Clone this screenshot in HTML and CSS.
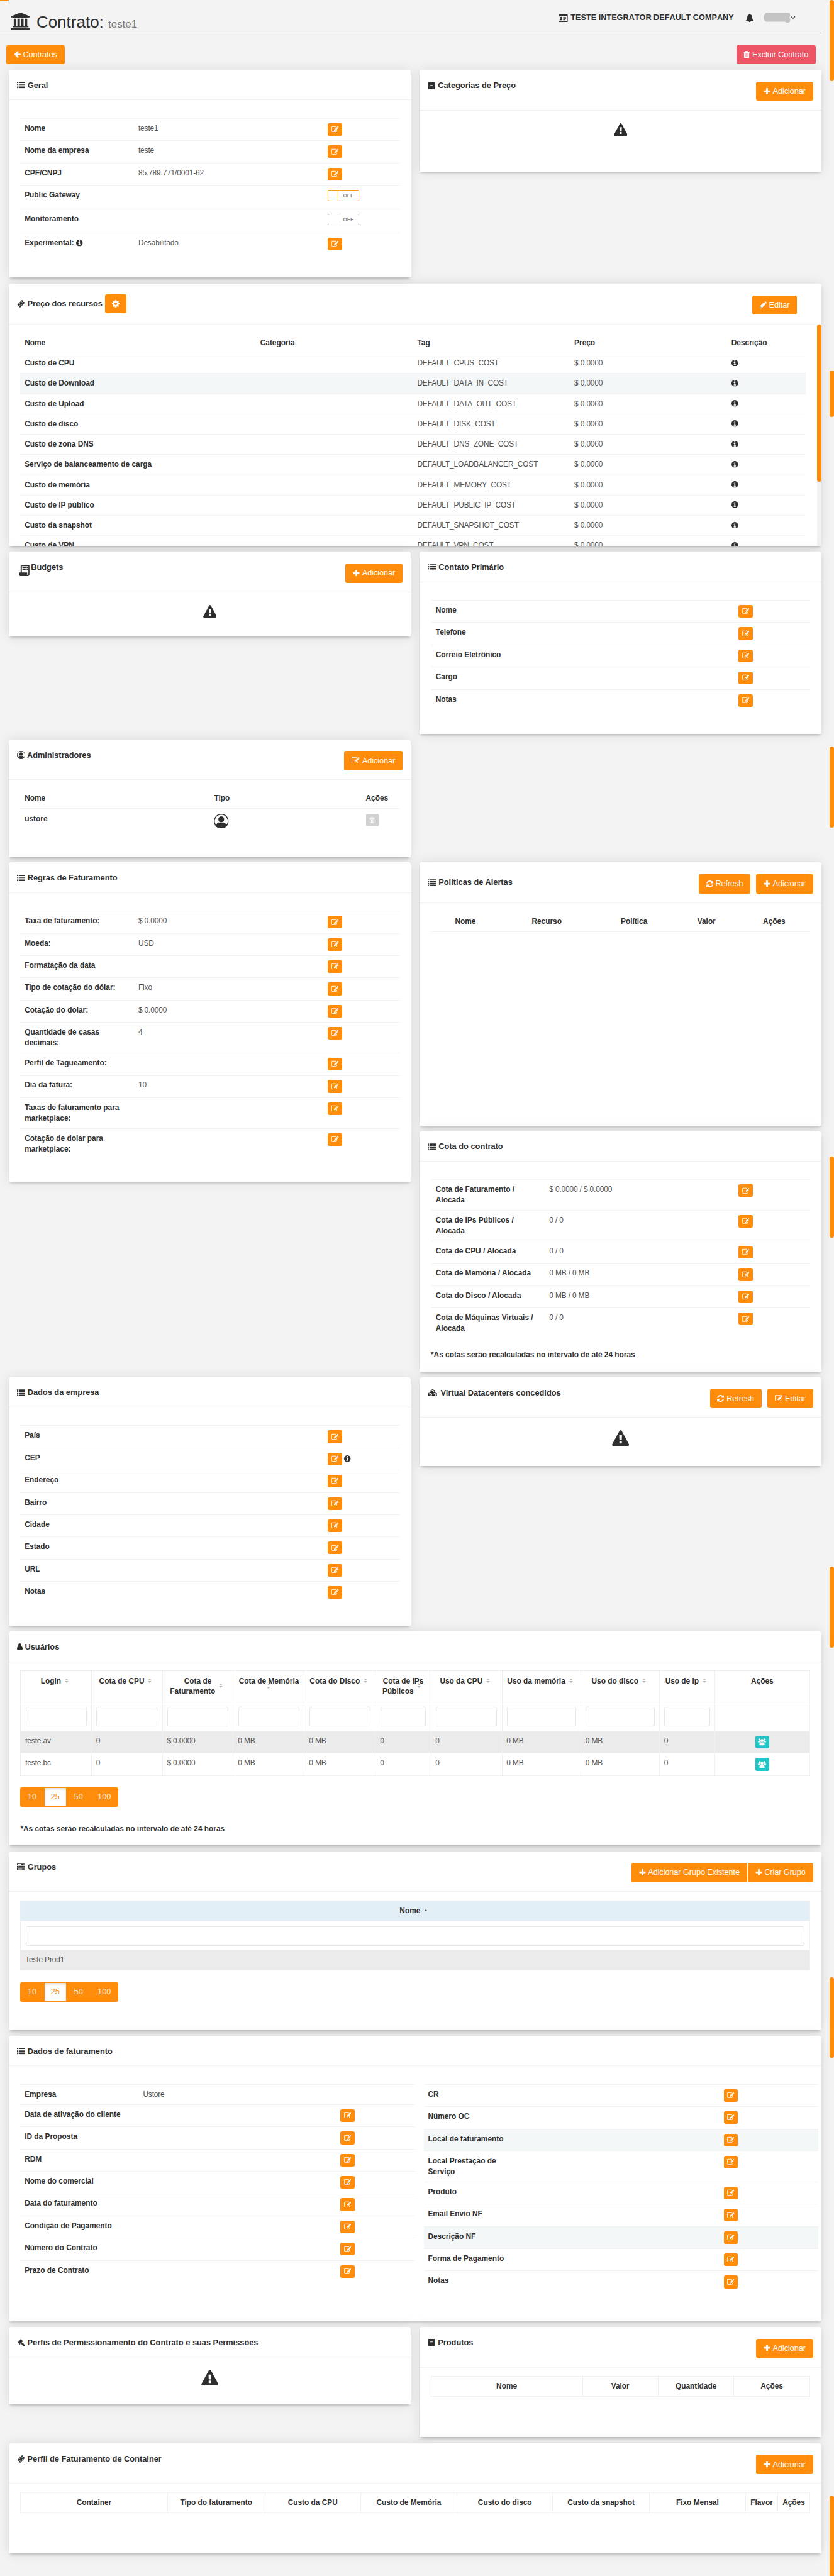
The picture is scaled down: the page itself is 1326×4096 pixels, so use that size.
FILE: index.html
```html
<!DOCTYPE html>
<html lang="pt-BR">
<head>
<meta charset="utf-8">
<title>Contrato: teste1</title>
<link rel="stylesheet" href="styles.css">
</head>
<body>
<svg class="sprite" aria-hidden="true">
<symbol id="edit" viewBox="0 0 1792 1792"><path d="M888 1184l116-116-152-152-116 116v56h96v96h56zm440-720q-16-16-33 1l-350 350q-17 17-1 33t33-1l350-350q17-17 1-33zm80 594v190q0 119-84.5 203.5t-203.5 84.5h-832q-119 0-203.5-84.5t-84.5-203.5v-832q0-119 84.5-203.5t203.5-84.5h832q63 0 117 25 15 7 18 23 3 17-9 29l-49 49q-14 14-32 8-23-6-45-6h-832q-66 0-113 47t-47 113v832q0 66 47 113t113 47h832q66 0 113-47t47-113v-126q0-13 9-22l64-64q15-15 35-7t20 29zm-96-738l288 288-672 672h-288v-288zm444 132l-92 92-288-288 92-92q28-28 68-28t68 28l152 152q28 28 28 68t-28 68z"/></symbol>
<symbol id="plus" viewBox="192 128 1408 1536"><path d="M1600 736v192q0 40-28 68t-68 28h-416v416q0 40-28 68t-68 28h-192q-40 0-68-28t-28-68v-416h-416q-40 0-68-28t-28-68v-192q0-40 28-68t68-28h416v-416q0-40 28-68t68-28h192q40 0 68 28t28 68v416h416q40 0 68 28t28 68z"/></symbol>
<symbol id="info" viewBox="128 128 1536 1536"><path d="M1152 1376v-160q0-14-9-23t-23-9h-96v-512q0-14-9-23t-23-9h-320q-14 0-23 9t-9 23v160q0 14 9 23t23 9h96v320h-96q-14 0-23 9t-9 23v160q0 14 9 23t23 9h448q14 0 23-9t9-23zm-128-896v-160q0-14-9-23t-23-9h-192q-14 0-23 9t-9 23v160q0 14 9 23t23 9h192q14 0 23-9t9-23zm640 416q0 209-103 385.5t-279.5 279.5-385.5 103-385.5-103-279.5-279.5-103-385.5 103-385.5 279.5-279.5 385.5-103 385.5 103 279.5 279.5 103 385.5z"/></symbol>
<symbol id="warn" viewBox="0 0 1792 1664"><path d="M1024 1375v-190q0-14-9.5-23.5t-22.5-9.5h-192q-13 0-22.5 9.5t-9.5 23.5v190q0 14 9.5 23.5t22.5 9.5h192q13 0 22.5-9.5t9.5-23.5zm-2-374l18-459q0-12-10-19-13-11-24-11h-220q-11 0-24 11-10 7-10 21l17 457q0 10 10 16.5t24 6.5h185q14 0 23.5-6.5t10.5-16.5zm-14-934l768 1408q35 63-2 126-17 29-46.5 46t-63.5 17h-1536q-34 0-63.5-17t-46.5-46q-37-63-2-126l768-1408q17-31 47-49t65-18 65 18 47 49z"/></symbol>
<symbol id="refresh" viewBox="128 128 1536 1536"><path d="M1639 1056q0 5-1 7-64 268-268 434.5t-478 166.5q-146 0-282.5-55t-243.5-157l-129 129q-19 19-45 19t-45-19-19-45v-448q0-26 19-45t45-19h448q26 0 45 19t19 45-19 45l-137 137q71 66 161 102t187 36q134 0 250-65t186-179q11-17 53-117 8-23 30-23h192q13 0 22.5 9.5t9.5 22.5zm25-800v448q0 26-19 45t-45 19h-448q-26 0-45-19t-19-45 19-45l138-138q-148-137-349-137-134 0-250 65t-186 179q-11 17-53 117-8 23-30 23h-199q-13 0-22.5-9.5t-9.5-22.5v-7q65-268 270-434.5t480-166.5q146 0 284 55.5t245 156.5l130-129q19-19 45-19t45 19 19 45z"/></symbol>
<symbol id="back" viewBox="64 160 1600 1600"><path d="M1664 896v128q0 53-32.5 90.5t-84.5 37.5h-704l293 294q38 36 38 90t-38 90l-75 76q-37 37-90 37-52 0-91-37l-651-652q-37-37-37-90 0-52 37-91l651-650q38-38 91-38 52 0 90 38l75 74q38 38 38 91t-38 91l-293 293h704q52 0 84.5 37.5t32.5 90.5z"/></symbol>
<symbol id="bank" viewBox="0 0 1920 1792"><path d="M960 0l960 384v128h-128q0 26-20.5 45t-48.5 19h-1526q-28 0-48.5-19t-20.5-45h-128v-128zm-704 640h256v768h128v-768h256v768h128v-768h256v768h128v-768h256v768h59q28 0 48.5 19t20.5 45v64h-1664v-64q0-26 20.5-45t48.5-19h59v-768zm1595 960q28 0 48.5 19t20.5 45v128h-1920v-128q0-26 20.5-45t48.5-19h1782z"/></symbol>
<symbol id="list" viewBox="0 0 14 11"><path d="M0 0h2v2H0zM3 0h11v2H3zM0 3h2v2H0zM3 3h11v2H3zM0 6h2v2H0zM3 6h11v2H3zM0 9h2v2H0zM3 9h11v2H3z"/></symbol>
<symbol id="server" viewBox="0 0 14 11"><path fill-rule="evenodd" d="M0 0h14v3H0zM1 1v1h6V1zM11.500 1v1h1V1zM0 4h14v3H0zM1 5v1h3V5zM11.500 5v1h1V5zM0 8h14v3H0zM1 9v1h8V9zM11.500 9v1h1V9z"/></symbol>
<symbol id="book" viewBox="0 0 12 12"><path fill-rule="evenodd" d="M.5 0h11v12H.5zM4 4.500v1.200h4V4.500z"/></symbol>
<symbol id="trash" viewBox="0 0 11 12"><path fill-rule="evenodd" d="M3.500 0h4l.7 1.500H11v1H10V11q0 1-1 1H2q-1 0-1-1V2.500H0v-1h2.800zM4.200.8l-.3.700h3.200l-.3-.700zM2.800 4v6h.9V4zM5 4v6h.9V4zM7.300 4v6h.9V4z"/></symbol>
<symbol id="bell" viewBox="0 0 14 14"><path d="M7 0q.9 0 .9 1Q11 1.800 11 5.500q0 4 2.500 6H8.600Q8.500 14 7 14t-1.600-2.500H.5Q3 9.500 3 5.500 3 1.800 6.100 1 6.100 0 7 0z"/></symbol>
<symbol id="card" viewBox="0 0 16 13"><path fill-rule="evenodd" d="M1 0h14q1 0 1 1v11q0 1-1 1H1q-1 0-1-1V1q0-1 1-1zM1.200 2.500V11.500H14.800V2.500zM2.500 10q0-2.600 1.300-2.800-.8-.700-.8-1.600Q3 4 4.500 4T6 5.600q0 .9-.8 1.600Q6.500 7.400 6.500 10zM8 4.500h5v1.200H8zM8 6.700h5v1.100H8zM8 8.800h3.500V10H8z"/></symbol>
<symbol id="gear" viewBox="0 0 12 12"><path fill-rule="evenodd" d="M5 0h2l.3 1.600 1 .4L9.700 1.100l1.300 1.300L10.100 3.700l.4 1L12 5v2l-1.500.3-.4 1 .9 1.400-1.300 1.300L8.300 10.100l-1 .4L7 12H5l-.3-1.500-1-.4L2.300 11 1 9.700 1.900 8.300l-.4-1L0 7V5l1.500-.3.4-1L1 2.400 2.300 1.100 3.700 2l1-.4zM6 4a2 2 0 1 0 .01 0z"/></symbol>
<symbol id="pencil" viewBox="0 0 12 12"><path fill-rule="evenodd" d="M0 12V8.800L7.300 1.500l3.200 3.200L3.200 12zM1 9.400v1.300h.9v.5h.9l.7-.7L1.600 8.700zM8 .8l.6-.5q.7-.6 1.400 0l1.700 1.700q.6.700 0 1.400l-.5.600z"/></symbol>
<symbol id="ticket" viewBox="0 0 14 14"><path fill-rule="evenodd" d="M8.400.2q.4-.4.8 0l1 1q-.3 1 .4 1.800t1.900.4l1.200 1.200q.4.400 0 .8L5.600 13.800q-.4.400-.8 0l-1.100-1.100q.3-1.100-.4-1.900t-1.800-.4L.3 9.200q-.4-.4 0-.8zM7.900 2.600L2.600 7.900l3.500 3.500 5.300-5.300zM7.900 3.400l2.700 2.700-4.500 4.500-2.700-2.700z"/></symbol>
<symbol id="receipt" viewBox="0 0 18 20"><path fill-rule="evenodd" d="M3 1l1 1 1.200-1 1.200 1 1.200-1L8.800 2 10 1l1.200 1 1.200-1 1.200 1 1.200-1L16 2l1.800-1v16q0 3-3 3H3q-3 0-3-3v-3h3zM5 3.500V14h9v3q0 1.200 1 1.200t1-1.200V3.500zM6 5h5.500v1.600H6zM13 5h2v1.600h-2zM6 8.500h5.500v1.600H6zM13 8.500h2v1.600h-2z"/></symbol>
<symbol id="usero" viewBox="0 0 24 24"><path fill-rule="evenodd" d="M12 0a12 12 0 1 1-.01 0zM12 1.600A10.400 10.400 0 0 0 4 18.700Q4.800 14 8.300 14q3.700 2 7.400 0 3.500 0 4.300 4.700A10.400 10.400 0 0 0 12 1.600z"/><circle cx="12" cy="9" r="4.800"/></symbol>
<symbol id="user" viewBox="0 0 10 12"><path d="M5 0a2.900 2.900 0 0 1 2 5q3 .4 3 4.500Q10 12 8 12H2q-2 0-2-2.500Q0 5.400 3 5a2.900 2.900 0 0 1 2-5z"/></symbol>
<symbol id="users" viewBox="0 0 16 14"><circle cx="3" cy="2.300" r="2.200"/><circle cx="13" cy="2.300" r="2.200"/><circle cx="8" cy="4.500" r="3"/><path d="M0 8q0-3.500 1.800-3.300 1.400.7 2.700 0Q4.300 6.500 5.300 7.300 4 7 3.300 8zM16 8q0-3.500-1.800-3.300-1.400.7-2.700 0 .2 1.800-.8 2.600 1.300-.3 2 .700zM5.500 7.500q2.500 1.500 5 0Q13 7.800 13 12q0 2-1.800 2H4.800Q3 14 3 12q0-4.200 2.500-4.500z"/></symbol>
<symbol id="cubes" viewBox="0 0 18 14"><path fill-rule="evenodd" d="M9 0l4 1.600v4.300l4.500 1.800v4.300L13.300 14 9 12.200 4.700 14 .5 12V7.700L5 5.900V1.600zM6.200 2.200L9 3.300l2.800-1.100L9 1.100zM9.500 4.300v2.200L12 5.500V3.300zM1.700 8.300l3 1.200 2.900-1.200-2.900-1.100zM5.200 10.400v2.200l2.700-1.200V9.300zM10.400 8.300l2.900 1.200 3-1.200-3-1.100zM13.800 10.400v2.200l2.500-1.200V9.300z"/></symbol>
<symbol id="gavel" viewBox="0 0 14 14"><path d="M6.500.3l4.200 4.200-1 .9-.4-.2-1.200 1.300 1.400 1.200.7-.3 3.500 3.600q.6.700 0 1.400l-1 1q-.7.600-1.400 0L7.800 9.800l.2-.7-1.300-1.300-1.200 1.300.2.400-.9 1L.4 6.300l1-.9.500.1L5.500 1.700l-.1-.4z"/></symbol>
</svg>
<div class="strip"></div>
<div class="scroll s1"></div><div class="scroll s2"></div><div class="scroll s3"></div><div class="scroll s4"></div><div class="scroll s5"></div><div class="scroll s6"></div><div class="scroll s7"></div>

<header class="top">
  <h1><svg class="bank"><use href="#bank"/></svg>Contrato: <small>teste1</small></h1>
  <div class="account">
    <svg class="i-card"><use href="#card"/></svg><b>TESTE INTEGRATOR DEFAULT COMPANY</b>
    <svg class="i-bell"><use href="#bell"/></svg>
    <svg class="mask" viewBox="0 0 51 15"><path fill="#c4c4c4" d="M4 0H39Q42.500 0 42.500 4L41 7l1.500 3Q43 15 38.500 15 35 15 34 13.500H4Q0 12 0 7T4 0z"/><path fill="none" stroke="#333" stroke-width="1.200" d="M43.600 5.300l3.300 3 3.300-3"/></svg>
  </div>
</header>
<div class="actions"><a class="btn"><svg><use href="#back"/></svg>Contratos</a><a class="btn danger"><svg class="tr"><use href="#trash"/></svg>Excluir Contrato</a></div>

<main>
<section class="card h-geral"><h2 class="head"><svg class="list"><use href="#list"/></svg>Geral</h2>
  <div class="kv">
    <div class="r"><b>Nome</b><span>teste1</span><i><a class="ed"><svg><use href="#edit"/></svg></a></i></div>
    <div class="r"><b>Nome da empresa</b><span>teste</span><i><a class="ed"><svg><use href="#edit"/></svg></a></i></div>
    <div class="r"><b>CPF/CNPJ</b><span>85.789.771/0001-62</span><i><a class="ed"><svg><use href="#edit"/></svg></a></i></div>
    <div class="r tall"><b>Public Gateway</b><span></span><i><a class="toggle on"><em></em>OFF</a></i></div>
    <div class="r tall"><b>Monitoramento</b><span></span><i><a class="toggle"><em></em>OFF</a></i></div>
    <div class="r"><b>Experimental: <svg class="info"><use href="#info"/></svg></b><span>Desabilitado</span><i><a class="ed"><svg><use href="#edit"/></svg></a></i></div>
  </div>
</section>
<section class="card h-cat"><div class="head big"><h2><svg class="book"><use href="#book"/></svg>Categorias de Preço</h2><a class="btn"><svg><use href="#plus"/></svg>Adicionar</a></div>
  <svg class="warn"><use href="#warn"/></svg>
</section>

<section class="card wide h-preco"><div class="head big"><h2 class="mid"><svg class="tk"><use href="#ticket"/></svg>Preço dos recursos<a class="btn gear"><svg><use href="#gear"/></svg></a></h2><a class="btn inset"><svg><use href="#pencil"/></svg>Editar</a></div>
  <div class="scroller"><div class="prices">
    <div class="p"><b>Nome</b><b>Categoria</b><b>Tag</b><b>Preço</b><b>Descrição</b></div>
    <div class="p"><b>Custo de CPU</b><span></span><span>DEFAULT_CPUS_COST</span><span>$ 0.0000</span><svg class="info"><use href="#info"/></svg></div>
    <div class="p alt"><b>Custo de Download</b><span></span><span>DEFAULT_DATA_IN_COST</span><span>$ 0.0000</span><svg class="info"><use href="#info"/></svg></div>
    <div class="p"><b>Custo de Upload</b><span></span><span>DEFAULT_DATA_OUT_COST</span><span>$ 0.0000</span><svg class="info"><use href="#info"/></svg></div>
    <div class="p"><b>Custo de disco</b><span></span><span>DEFAULT_DISK_COST</span><span>$ 0.0000</span><svg class="info"><use href="#info"/></svg></div>
    <div class="p"><b>Custo de zona DNS</b><span></span><span>DEFAULT_DNS_ZONE_COST</span><span>$ 0.0000</span><svg class="info"><use href="#info"/></svg></div>
    <div class="p"><b>Serviço de balanceamento de carga</b><span></span><span>DEFAULT_LOADBALANCER_COST</span><span>$ 0.0000</span><svg class="info"><use href="#info"/></svg></div>
    <div class="p"><b>Custo de memória</b><span></span><span>DEFAULT_MEMORY_COST</span><span>$ 0.0000</span><svg class="info"><use href="#info"/></svg></div>
    <div class="p"><b>Custo de IP público</b><span></span><span>DEFAULT_PUBLIC_IP_COST</span><span>$ 0.0000</span><svg class="info"><use href="#info"/></svg></div>
    <div class="p"><b>Custo da snapshot</b><span></span><span>DEFAULT_SNAPSHOT_COST</span><span>$ 0.0000</span><svg class="info"><use href="#info"/></svg></div>
    <div class="p"><b>Custo de VPN</b><span></span><span>DEFAULT_VPN_COST</span><span>$ 0.0000</span><svg class="info"><use href="#info"/></svg></div>
  </div><div class="bar"><div></div></div></div>
</section>

<section class="card h-budget"><div class="head big"><h2><svg class="receipt"><use href="#receipt"/></svg>Budgets</h2><a class="btn low"><svg><use href="#plus"/></svg>Adicionar</a></div>
  <svg class="warn"><use href="#warn"/></svg>
</section>
<section class="card h-contato"><h2 class="head"><svg class="list"><use href="#list"/></svg>Contato Primário</h2>
  <div class="kv">
    <div class="r"><b>Nome</b><span></span><i><a class="ed"><svg><use href="#edit"/></svg></a></i></div>
    <div class="r"><b>Telefone</b><span></span><i><a class="ed"><svg><use href="#edit"/></svg></a></i></div>
    <div class="r"><b>Correio Eletrônico</b><span></span><i><a class="ed"><svg><use href="#edit"/></svg></a></i></div>
    <div class="r"><b>Cargo</b><span></span><i><a class="ed"><svg><use href="#edit"/></svg></a></i></div>
    <div class="r"><b>Notas</b><span></span><i><a class="ed"><svg><use href="#edit"/></svg></a></i></div>
  </div>
</section>

<section class="card h-admin"><div class="head big"><h2><svg class="uo"><use href="#usero"/></svg>Administradores</h2><a class="btn low"><svg class="sq"><use href="#edit"/></svg>Adicionar</a></div>
  <div class="admins">
    <div class="a"><b>Nome</b><b>Tipo</b><b>Ações</b></div>
    <div class="a"><b>ustore</b><svg class="avatar"><use href="#usero"/></svg><i><a class="del"><svg><use href="#trash"/></svg></a></i></div>
  </div>
</section>

<section class="card h-regras"><h2 class="head"><svg class="list"><use href="#list"/></svg>Regras de Faturamento</h2>
  <div class="kv">
    <div class="r"><b>Taxa de faturamento:</b><span>$ 0.0000</span><i><a class="ed"><svg><use href="#edit"/></svg></a></i></div>
    <div class="r"><b>Moeda:</b><span>USD</span><i><a class="ed"><svg><use href="#edit"/></svg></a></i></div>
    <div class="r"><b>Formatação da data</b><span></span><i><a class="ed"><svg><use href="#edit"/></svg></a></i></div>
    <div class="r"><b>Tipo de cotação do dólar:</b><span>Fixo</span><i><a class="ed"><svg><use href="#edit"/></svg></a></i></div>
    <div class="r"><b>Cotação do dolar:</b><span>$ 0.0000</span><i><a class="ed"><svg><use href="#edit"/></svg></a></i></div>
    <div class="r"><b>Quantidade de casas decimais:</b><span>4</span><i><a class="ed"><svg><use href="#edit"/></svg></a></i></div>
    <div class="r"><b>Perfil de Tagueamento:</b><span></span><i><a class="ed"><svg><use href="#edit"/></svg></a></i></div>
    <div class="r"><b>Dia da fatura:</b><span>10</span><i><a class="ed"><svg><use href="#edit"/></svg></a></i></div>
    <div class="r"><b>Taxas de faturamento para marketplace:</b><span></span><i><a class="ed"><svg><use href="#edit"/></svg></a></i></div>
    <div class="r"><b>Cotação de dolar para marketplace:</b><span></span><i><a class="ed"><svg><use href="#edit"/></svg></a></i></div>
  </div>
</section>
<div class="stack">
  <section class="card h-alertas"><div class="head big"><h2 class="mid"><svg class="list"><use href="#list"/></svg>Políticas de Alertas</h2><a class="btn"><svg><use href="#refresh"/></svg>Refresh</a><a class="btn next"><svg><use href="#plus"/></svg>Adicionar</a></div>
    <div class="alerts"><b>Nome</b><b>Recurso</b><b>Política</b><b>Valor</b><b>Ações</b></div>
  </section>
  <section class="card h-cota"><h2 class="head"><svg class="list"><use href="#list"/></svg>Cota do contrato</h2>
    <div class="kv">
      <div class="r"><b>Cota de Faturamento / Alocada</b><span>$ 0.0000 / $ 0.0000</span><i><a class="ed"><svg><use href="#edit"/></svg></a></i></div>
      <div class="r"><b>Cota de IPs Públicos / Alocada</b><span>0 / 0</span><i><a class="ed"><svg><use href="#edit"/></svg></a></i></div>
      <div class="r"><b>Cota de CPU / Alocada</b><span>0 / 0</span><i><a class="ed"><svg><use href="#edit"/></svg></a></i></div>
      <div class="r"><b>Cota de Memória / Alocada</b><span>0 MB / 0 MB</span><i><a class="ed"><svg><use href="#edit"/></svg></a></i></div>
      <div class="r"><b>Cota do Disco / Alocada</b><span>0 MB / 0 MB</span><i><a class="ed"><svg><use href="#edit"/></svg></a></i></div>
      <div class="r"><b>Cota de Máquinas Virtuais / Alocada</b><span>0 / 0</span><i><a class="ed"><svg><use href="#edit"/></svg></a></i></div>
    </div>
    <p class="note">*As cotas serão recalculadas no intervalo de até 24 horas</p>
  </section>
</div>

<section class="card h-empresa"><h2 class="head"><svg class="list"><use href="#list"/></svg>Dados da empresa</h2>
  <div class="kv">
    <div class="r"><b>País</b><span></span><i><a class="ed"><svg><use href="#edit"/></svg></a></i></div>
    <div class="r"><b>CEP</b><span></span><i><a class="ed"><svg><use href="#edit"/></svg></a><svg class="info"><use href="#info"/></svg></i></div>
    <div class="r"><b>Endereço</b><span></span><i><a class="ed"><svg><use href="#edit"/></svg></a></i></div>
    <div class="r"><b>Bairro</b><span></span><i><a class="ed"><svg><use href="#edit"/></svg></a></i></div>
    <div class="r"><b>Cidade</b><span></span><i><a class="ed"><svg><use href="#edit"/></svg></a></i></div>
    <div class="r"><b>Estado</b><span></span><i><a class="ed"><svg><use href="#edit"/></svg></a></i></div>
    <div class="r"><b>URL</b><span></span><i><a class="ed"><svg><use href="#edit"/></svg></a></i></div>
    <div class="r"><b>Notas</b><span></span><i><a class="ed"><svg><use href="#edit"/></svg></a></i></div>
  </div>
</section>
<section class="card h-vdc"><div class="head big"><h2><svg class="cubes"><use href="#cubes"/></svg>Virtual Datacenters concedidos</h2><a class="btn"><svg><use href="#refresh"/></svg>Refresh</a><a class="btn next"><svg class="sq"><use href="#edit"/></svg>Editar</a></div>
  <svg class="warn lg"><use href="#warn"/></svg>
</section>

<section class="card wide h-users"><h2 class="head"><svg class="us"><use href="#user"/></svg>Usuários</h2>
  <div class="grid users">
    <div class="g gh"><b><span class="sort">Login</span></b><b><span class="sort">Cota de CPU</span></b><b><span class="sort">Cota de Faturamento</span></b><b><span class="sort below">Cota de Memória</span></b><b><span class="sort">Cota do Disco</span></b><b><span class="sort">Cota de IPs Públicos</span></b><b><span class="sort">Uso da CPU</span></b><b><span class="sort">Uso da memória</span></b><b><span class="sort">Uso do disco</span></b><b><span class="sort">Uso de Ip</span></b><b>Ações</b></div>
    <div class="g gf"><span><input></span><span><input></span><span><input></span><span><input></span><span><input></span><span><input></span><span><input></span><span><input></span><span><input></span><span><input></span><span></span></div>
    <div class="g gd odd"><span>teste.av</span><span>0</span><span>$ 0.0000</span><span>0 MB</span><span>0 MB</span><span>0</span><span>0</span><span>0 MB</span><span>0 MB</span><span>0</span><span class="act"><a class="ed teal"><svg><use href="#users"/></svg></a></span></div>
    <div class="g gd"><span>teste.bc</span><span>0</span><span>$ 0.0000</span><span>0 MB</span><span>0 MB</span><span>0</span><span>0</span><span>0 MB</span><span>0 MB</span><span>0</span><span class="act"><a class="ed teal"><svg><use href="#users"/></svg></a></span></div>
  </div>
  <div class="pager"><a>10</a><a class="cur">25</a><a>50</a><a class="l">100</a></div>
  <p class="note">*As cotas serão recalculadas no intervalo de até 24 horas</p>
</section>

<section class="card wide h-grupos"><div class="head big"><h2><svg class="list"><use href="#server"/></svg>Grupos</h2><a class="btn"><svg><use href="#plus"/></svg>Adicionar Grupo Existente</a><a class="btn join"><svg><use href="#plus"/></svg>Criar Grupo</a></div>
  <div class="grid groups">
    <div class="g gh blue"><b><span class="sort asc">Nome</span></b></div>
    <div class="g gf"><span><input></span></div>
    <div class="g gd odd"><span>Teste Prod1</span></div>
  </div>
  <div class="pager"><a>10</a><a class="cur">25</a><a>50</a><a class="l">100</a></div>
</section>

<section class="card wide h-fat"><h2 class="head"><svg class="list"><use href="#list"/></svg>Dados de faturamento</h2>
  <div class="pair">
    <div class="kv left">
      <div class="r short"><b>Empresa</b><span>Ustore</span><i></i></div>
      <div class="r"><b>Data de ativação do cliente</b><span></span><i><a class="ed"><svg><use href="#edit"/></svg></a></i></div>
      <div class="r"><b>ID da Proposta</b><span></span><i><a class="ed"><svg><use href="#edit"/></svg></a></i></div>
      <div class="r"><b>RDM</b><span></span><i><a class="ed"><svg><use href="#edit"/></svg></a></i></div>
      <div class="r"><b>Nome do comercial</b><span></span><i><a class="ed"><svg><use href="#edit"/></svg></a></i></div>
      <div class="r"><b>Data do faturamento</b><span></span><i><a class="ed"><svg><use href="#edit"/></svg></a></i></div>
      <div class="r"><b>Condição de Pagamento</b><span></span><i><a class="ed"><svg><use href="#edit"/></svg></a></i></div>
      <div class="r"><b>Número do Contrato</b><span></span><i><a class="ed"><svg><use href="#edit"/></svg></a></i></div>
      <div class="r"><b>Prazo de Contrato</b><span></span><i><a class="ed"><svg><use href="#edit"/></svg></a></i></div>
    </div>
    <div class="kv quarter">
      <div class="r"><b>CR</b><span></span><i><a class="ed"><svg><use href="#edit"/></svg></a></i></div>
      <div class="r"><b>Número OC</b><span></span><i><a class="ed"><svg><use href="#edit"/></svg></a></i></div>
      <div class="r alt"><b>Local de faturamento</b><span></span><i><a class="ed"><svg><use href="#edit"/></svg></a></i></div>
      <div class="r"><b>Local Prestação de Serviço</b><span></span><i><a class="ed"><svg><use href="#edit"/></svg></a></i></div>
      <div class="r"><b>Produto</b><span></span><i><a class="ed"><svg><use href="#edit"/></svg></a></i></div>
      <div class="r"><b>Email Envio NF</b><span></span><i><a class="ed"><svg><use href="#edit"/></svg></a></i></div>
      <div class="r alt"><b>Descrição NF</b><span></span><i><a class="ed"><svg><use href="#edit"/></svg></a></i></div>
      <div class="r"><b>Forma de Pagamento</b><span></span><i><a class="ed"><svg><use href="#edit"/></svg></a></i></div>
      <div class="r"><b>Notas</b><span></span><i><a class="ed"><svg><use href="#edit"/></svg></a></i></div>
    </div>
  </div>
</section>

<section class="card h-perfis"><h2 class="head"><svg class="tk"><use href="#gavel"/></svg>Perfis de Permissionamento do Contrato e suas Permissões</h2>
  <svg class="warn lg"><use href="#warn"/></svg>
</section>
<section class="card h-prod"><div class="head big"><h2><svg class="book"><use href="#book"/></svg>Produtos</h2><a class="btn"><svg><use href="#plus"/></svg>Adicionar</a></div>
  <div class="cols products"><b>Nome</b><b>Valor</b><b>Quantidade</b><b>Ações</b></div>
</section>

<section class="card wide h-cont"><div class="head big"><h2><svg class="tk"><use href="#ticket"/></svg>Perfil de Faturamento de Container</h2><a class="btn"><svg><use href="#plus"/></svg>Adicionar</a></div>
  <div class="cols containers"><b>Container</b><b>Tipo do faturamento</b><b>Custo da CPU</b><b>Custo de Memória</b><b>Custo do disco</b><b>Custo da snapshot</b><b>Fixo Mensal</b><b>Flavor</b><b>Ações</b></div>
</section>
</main>
</body>
</html>
```
FILE: styles.css
```css
* { box-sizing: border-box; }
html { background: #f3f3f3; }
body { margin: 0; width: 1326px; height: 4096px; position: relative; overflow: hidden; background: #f3f3f3; color: #2f2f2f; font: 11.88px/17px "Liberation Sans", Arial, sans-serif; }
svg { fill: currentColor; flex: none; }
i, em { font-style: normal; }
.sprite { display: none; }

/* scrollbar thumbs */
.strip { position: absolute; left: 0; top: 0; width: 13.6px; height: 2px; background: #ff8c0a; }
.scroll { position: absolute; left: 1319.3px; width: 6.7px; height: 128.6px; border-radius: 3.500px; background: #ff8c0a; }
.s1 { top: 0; }
.s2 { top: 589.7px; height: 73.500px; border-radius: 0 0 3.500px 3.500px; }
.s3 { top: 1187px; }
.s4 { top: 1839px; }
.s5 { top: 2491.200px; }
.s6 { top: 3143.500px; }
.s7 { top: 3968.300px; height: 128px; border-radius: 3.500px 3.500px 0 0; }

.top { display: flex; justify-content: space-between; width: 1306px; height: 53px; padding-left: 18.2px; border-bottom: 1px solid #c3c3c3; }
.top h1 { display: flex; align-items: baseline; margin: 0; padding-top: 17.500px; font-weight: 400; font-size: 26px; line-height: 34px; white-space: pre; }
.top small { font-size: 16.900px; color: #777; }
.bank { width: 29.200px; height: 27.300px; margin: 2.500px 10.500px 0 0; align-self: flex-start; }
.account { display: flex; align-items: center; height: 57px; padding-right: 41.300px; font-size: 12.7px; font-kerning: none; }
.i-card { width: 14.800px; height: 12px; margin-right: 4.200px; }
.i-bell { width: 14px; height: 13.500px; margin: 0 15px 0 18px; }
.mask { width: 51px; height: 15px; }

.actions { display: flex; justify-content: space-between; height: 58.100px; padding: 18.600px 28.900px 0 9.800px; }
.btn { display: inline-flex; align-items: center; height: 30.700px; padding: 0 11.900px; border-radius: 3px; background: #ff8c0a; color: #fff; font-size: 12.8px; font-weight: 400; line-height: 18px; letter-spacing: -.12px; white-space: nowrap; }
.btn svg { width: 11px; height: 11px; margin-right: 3.700px; }
.btn svg.sq { width: 12.800px; height: 12.800px; }
.btn svg.tr { width: 10px; height: 11.500px; }
.danger { background: #ed5565; }

main { display: grid; width: 1292.400px; margin-left: 13.600px; grid-template-columns: 639.700px 638.800px; column-gap: 13.900px; grid-template-rows: 339.900px 426.300px 298.600px 195.600px 818.200px 404.600px 349.300px 293.500px 462.900px 184.700px auto; align-items: start; }
.wide { grid-column: 1 / -1; }
.card { position: relative; background: #fff; border-radius: 4px 4px 0 0; box-shadow: 0 0 20px rgba(0,0,0,.1), 0 4px 4px -2px rgba(0,0,0,.2); }
.card h2 { margin: 0; font-size: 12.8px; font-weight: 700; line-height: 18px; display: flex; align-items: center; }
.card .head { display: flex; height: 48.300px; padding: 2px 13.300px 0; border-bottom: 1px solid #f0f0f0; }
.card .big { height: 64.600px; align-items: flex-start; padding-top: 18.600px; }
.card .big h2 { flex: 1; margin-top: -2.600px; }
.card .big h2.mid { margin-top: 4.400px; height: 18px; }
.inset { margin-right: 25.500px; }
.next { margin-left: 8.700px; }
.join { margin-left: .9px; }
.gear { width: 34.500px; margin-left: 4px; padding: 0; justify-content: center; }
.btn.gear svg { margin: 0; width: 12px; height: 12px; }
.list { width: 13px; height: 10.500px; margin-right: 3.800px; }
.book { width: 12px; height: 11px; margin-right: 3.800px; }
.tk { width: 13px; height: 12px; margin-right: 3.600px; }
.receipt { width: 17px; height: 19px; margin: 0 2.300px -9px 3px; }
.card .big h2:has(.receipt) { height: 18px; }
.uo { width: 13px; height: 13px; margin-right: 3px; }
.us { width: 9px; height: 11px; margin-right: 3.600px; }
.cubes { width: 15.500px; height: 11.500px; margin-right: 4.600px; }
.warn { display: block; width: 21.800px; height: 20px; margin: 20px auto 0; }
.warn.lg { width: 27.400px; height: 25px; }

.h-geral { height: 330.200px; }
.h-cat { height: 161.900px; }
.h-preco { height: 417.500px; }
.h-budget { height: 134.500px; }
.h-contato { height: 289.900px; }
.h-admin { height: 186.700px; }
.h-regras { height: 507.500px; grid-column: 1; }
.h-alertas { height: 418.300px; }
.h-cota { height: 382.400px; }
.h-empresa { height: 395.700px; grid-column: 1; }
.h-vdc { height: 141px; }
.h-users { height: 340px; }
.h-grupos { height: 284.400px; }
.h-fat { height: 453.400px; }
.h-perfis { height: 123.300px; }
.h-prod, .h-cont { height: 175.200px; }
.stack { display: flex; flex-direction: column; gap: 8.800px; }

.kv { margin: 28.500px 18.300px 0 18.800px; }
.r { display: grid; grid-template-columns: 30% 50% 20%; min-height: 35.400px; padding: 6.900px 0 7px; border-top: 1px solid #f1f1f1; }
.r.tall { min-height: 38.100px; }
.r.short { min-height: 32.200px; }
.r > * { padding: 0 6.800px; }
.r i { display: flex; align-items: flex-start; }
.r span, .p span, .gd span { color: #505050; letter-spacing: -.13px; }
.quarter .r { grid-template-columns: 25% 50% 25%; }
.left .r b { white-space: nowrap; }
.alt { background: #f4f7f8; }
.ed { display: flex; align-items: center; justify-content: center; width: 22.600px; height: 20.200px; border-radius: 2.700px; background: #ff8c0a; color: #fff; }
.ed svg { width: 11.500px; height: 11.500px; }
.teal { background: #23c6c8; }
.teal svg { width: 13px; height: 11.500px; }
.info { width: 10.600px; height: 10.600px; vertical-align: -1.500px; }
i .info { margin: 4.700px 0 0 3.500px; }
.toggle { display: flex; align-items: center; width: 49.400px; height: 18.300px; border: 1.500px solid #8c8c8c; border-radius: 2px; color: #8c8c8c; font-size: 8.500px; font-weight: 700; }
.toggle em { width: 15.500px; align-self: stretch; margin-right: 7.500px; border-right: 1.500px solid #8c8c8c; }
.toggle.on, .toggle.on em { border-color: #f39a1f; }

.scroller { display: flex; justify-content: space-between; height: 352.900px; overflow: hidden; }
.prices { width: 1248.500px; margin: 13.300px 0 0 18.800px; }
.p { display: grid; grid-template-columns: 30% 20% 20% 20% 10%; height: 32.250px; padding-top: 6.900px; border-top: 1px solid #f1f1f1; }
.p:first-child { border-color: transparent; }
.p > * { margin-left: 6.800px; }
.p .info { margin-top: 2.700px; }
.bar { width: 7.200px; background: #f1f1f1; }
.bar div { height: 250.600px; border-radius: 3.500px; background: #ff8c0a; }

.admins { margin: 12.600px 18.300px 0 18.800px; }
.a { display: grid; grid-template-columns: 50% 40% 10%; height: 33px; padding-top: 8px; border-bottom: 1px solid #f1f1f1; }
.a:last-child { border: 0; padding-top: 7.500px; }
.a > * { margin-left: 6.800px; }
.avatar { width: 23.500px; height: 23.500px; }
.del { display: flex; align-items: center; justify-content: center; width: 20.400px; height: 20.400px; border-radius: 2.700px; background: #d1d1d1; color: #f2f2f2; }
.del svg { width: 9px; height: 10px; }

.alerts { display: grid; grid-template-columns: 110px 148.400px 129.600px 100.600px 114.700px; margin: 12.500px 17.800px 0; height: 33px; padding-top: 8.400px; border-bottom: 1px solid #f1f1f1; text-align: center; }
.note { margin: 18px 17.800px 0; font-weight: 700; }
.h-users .note { margin: 27px 18.800px 0; }

.grid { margin: 13.700px 18.300px 0 18.800px; border: solid #ededed; border-width: 1px 0 0 1px; }
.g { display: grid; border-bottom: 1px solid #f0f0f0; }
.g > * { border-right: 1px solid #f0f0f0; }
.users .g { grid-template-columns: 112.500px 112.700px 112.900px 113px 113px 88.100px 113px 125.400px 125px 88.200px 1fr; }
.gh { text-align: center; height: 49.300px; }
.gh b { padding: 7.300px 6.500px; line-height: 16.500px; }
.gf { height: 46.400px; }
.gf span { padding: 7.300px; }
.gf input { display: block; width: 100%; height: 31.300px; margin: 0; border: 1px solid #e5e6e7; border-radius: 3px; background: #fff; }
.gd { height: 35.300px; }
.gd span { padding: 7.200px 6.800px; }
.gd .act { display: flex; justify-content: center; }
.odd { background: #ebebeb; }
.blue { background: #e2eff7; height: 32.600px; }
.groups .gf { height: 45.600px; }
.groups .gd { height: 32.200px; }
.sort { position: relative; padding-right: 16.400px; }
.sort::before, .sort::after { content: ""; position: absolute; right: 4.500px; border: solid transparent; border-width: 0 3.500px; top: 50%; }
.sort::before { border-bottom: 3.500px solid #b5b5b5; margin-top: -4px; }
.sort::after { border-top: 3.500px solid #b5b5b5; margin-top: .6px; }
.sort.asc::before { border-bottom-color: #555; margin-top: -2px; }
.sort.asc::after { display: none; }
.sort.below { padding: 0; white-space: nowrap; }
.sort.below::before, .sort.below::after { right: 45px; top: calc(50% + 8.500px); }
.pager { display: flex; width: 156.100px; height: 30.700px; margin: 18.700px 0 0 18.800px; border-radius: 3px; overflow: hidden; background: #ff8c0a; font-size: 12.8px; line-height: 30.700px; text-align: center; color: #ffe9cf; }
.pager a { width: 37.200px; }
.pager .cur { width: 36.500px; background: #fff; border: 1px solid #ff8c0a; color: #ff8c0a; line-height: 28.700px; box-shadow: inset 0 2px 4px rgba(0,0,0,.12); }
.pager .l { width: 45px; }

.pair { display: grid; grid-template-columns: 627.300px 627.300px; column-gap: 13.900px; padding: 28.500px 0 0 18.800px; }
.pair .kv { margin: 0; }

.cols { display: grid; height: 33px; border: 1px solid #f0f0f0; text-align: center; margin: 13.800px 18.300px 0 18.800px; }
.cols b { padding-top: 7px; border-right: 1px solid #f0f0f0; white-space: nowrap; }
.cols b:last-child { border: 0; }
.products { margin-left: 17.500px; grid-template-columns: 240.900px 120.200px 120.700px 1fr; }
.containers { grid-template-columns: 233.200px 155.200px 151.900px 153.700px 151.800px 154px 152.600px 51.600px 1fr; }
```
